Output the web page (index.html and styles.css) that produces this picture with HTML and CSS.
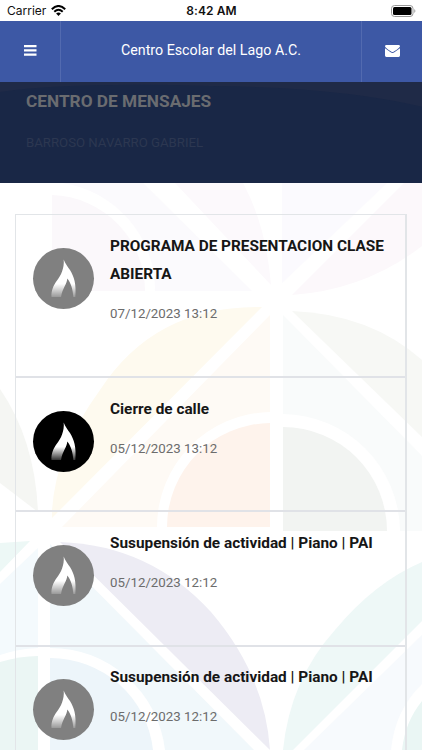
FILE: index.html
```html
<!DOCTYPE html>
<html lang="es">
<head>
<meta charset="utf-8">
<title>Centro de mensajes</title>
<link rel="stylesheet" href="styles.css">
</head>
<body>
<svg width="0" height="0" class="defs">
  <defs>
    <linearGradient id="fade" x1="0" y1="0" x2="0" y2="1">
      <stop offset="0" stop-color="#fff"/><stop offset=".65" stop-color="#fff"/><stop offset="1" stop-color="#fff" stop-opacity=".2"/>
    </linearGradient>
    <symbol id="flame" viewBox="0 0 61 61">
      <path fill="url(#fade)" d="M30.700 11.500C32 15 34.500 18.500 37 22C41 28.500 43.500 36 42.300 49H40.300C40 42 38 35 34.300 30.500C34 36 29.500 40 28 49H18.500C18 43 20.500 37 24 32.500C28 27.500 31.500 20 30.700 11.500Z"/>
    </symbol>
  </defs>
</svg>
<div class="phone">
  <div class="status">
    <div class="carrier">Carrier
      <svg width="15" height="11" viewBox="0 0 15 11"><g fill="none" stroke="#000" stroke-width="2"><path d="M.8 4.200Q7.500-2.200 14.200 4.200"/><path d="M3.300 6.700Q7.500 2.800 11.700 6.700"/></g><path d="M5.100 8.400Q7.500 6.400 9.900 8.400L7.500 10.900Z"/></svg>
    </div>
    <div class="time">8:42 AM</div>
    <svg class="battery" width="25" height="12" viewBox="0 0 25 12"><rect x=".5" y=".5" width="21.500" height="11" rx="3" fill="none" stroke="#999"/><rect x="2" y="2" width="18.500" height="8" rx="1.500"/><path d="M23.300 4Q25.500 6 23.300 8Z" fill="#999"/></svg>
  </div>
  <header class="bar">
    <div class="side"><svg width="13" height="11" viewBox="0 0 13 11"><path fill="#fff" d="M0 0h12.500v2.200H0zM0 4.300h12.500v2.200H0zM0 8.600h12.500v2.200H0z"/></svg></div>
    <div class="school">Centro Escolar del Lago A.C.</div>
    <div class="side right"><svg width="15" height="12" viewBox="0 0 15 12"><path fill="#fff" d="M1.400 0h12.200Q15 0 15 1.400Q14.500 2.800 8.800 6.500Q7.500 7.500 6.200 6.500Q.5 2.800 0 1.400Q0 0 1.400 0ZM0 3.200L5.600 7.300Q7.500 8.700 9.400 7.300L15 3.200V10.600Q15 12 13.600 12H1.400Q0 12 0 10.600Z"/></svg></div>
  </header>
  <section class="hero">
    <svg class="hill" viewBox="0 0 422 102" preserveAspectRatio="none"><path d="M0 10Q70 0 210 4Q340 5 422 25V102H0Z" fill="#192746"/></svg>
    <h1>CENTRO DE MENSAJES</h1>
    <p>BARROSO NAVARRO GABRIEL</p>
  </section>
  <main>
    <svg class="pattern" viewBox="0 183 422 567">
      <path fill="#fbf8fb" d="M52 195A96 96 0 0 1 145 291H52Z"/>
      <path fill="#fbfafd" d="M62 183H143L252 291H155A108 108 0 0 0 62 183Z"/>
      <path fill="#fcf9fc" d="M175 183H243Q266 225 271 285Z"/>
      <path fill="#fbfafe" d="M282 183H387L282 283Z"/>
      <path fill="#fcf8fb" d="M404 183H422V246Q365 290 292 295Z"/>
      <path fill="#fefaef" d="M262 307Q155 305 100 390Q56 450 52 510V518Z"/>
      <path fill="#fefaf5" d="M270 315V412A115 115 0 0 0 157 527H62Z"/>
      <path fill="#fef3ec" d="M270 423V527H167A104 104 0 0 1 270 423Z"/>
      <path fill="#f9fbfb" d="M283 315L422 456V531H400A118 118 0 0 0 283 414Z"/>
      <path fill="#f2f4f2" d="M283 427A104 104 0 0 1 387 531H283Z"/>
      <path fill="#f7f8f5" d="M292 311Q370 314 422 360V437Z"/>
      <path fill="#f5f6f3" d="M0 389Q35 440 38 512L0 483Z"/>
      <path fill="#edf8f6" d="M0 543L30 541L0 572Z"/>
      <path fill="#f4fafd" d="M38 548V648Q17 649 0 655V584Z"/>
      <path fill="#f1f8fb" d="M50 544L254 750H165A115 115 0 0 0 50 648Z"/>
      <path fill="#ebf6f4" d="M38 656V750H0V662Q20 656 38 656Z"/>
      <path fill="#edf5fa" d="M50 658A103 103 0 0 1 153 750H50Z"/>
      <path fill="#edecf4" d="M60 542Q150 545 211 612Q265 675 270 750Z"/>
      <path fill="#eef8f7" d="M283 750Q290 680 335 630Q375 582 422 562V621L293 750Z"/>
      <path fill="#f7fafd" d="M304 750L422 635V684Q395 710 391 750Z"/>
      <path fill="#eaf6f4" d="M402 750Q405 722 422 701V750Z"/>
    </svg>
    <div class="list">
      <article class="card tall"><svg class="avatar"><use href="#flame"/></svg><div><h2>PROGRAMA DE PRESENTACION CLASE ABIERTA</h2><time>07/12/2023 13:12</time></div></article>
      <article class="card"><svg class="avatar unread"><use href="#flame"/></svg><div><h2>Cierre de calle</h2><time>05/12/2023 13:12</time></div></article>
      <article class="card"><svg class="avatar"><use href="#flame"/></svg><div><h2>Susupensión de actividad | Piano | PAI</h2><time>05/12/2023 12:12</time></div></article>
      <article class="card"><svg class="avatar"><use href="#flame"/></svg><div><h2>Susupensión de actividad | Piano | PAI</h2><time>05/12/2023 12:12</time></div></article>
    </div>
  </main>
</div>
</body>
</html>
```
FILE: styles.css
```css
* { box-sizing: border-box; }
body { margin: 0; background: #fff; font-family: Roboto, sans-serif; }
.defs { position: absolute; }
.phone { width: 422px; height: 750px; overflow: hidden; display: flex; flex-direction: column; }
.status { height: 21px; flex: none; display: grid; grid-template-columns: 1fr auto 1fr; align-items: center; padding: 0 6px 0 7px; font: 12px/21px Inter, sans-serif; color: #111; }
.carrier { display: flex; align-items: center; gap: 5px; }
.time { font-weight: 600; font-size: 12px; letter-spacing: .1px; }
.battery { justify-self: end; }
.bar { height: 61px; flex: none; display: flex; background: #3d58a5; color: #fff; }
.side { width: 61px; display: flex; align-items: center; justify-content: center; border-right: 1px solid #526ab0; }
.side.right { border-right: 0; border-left: 1px solid #526ab0; }
.side svg { margin-top: -2px; }
.school { flex: 1; text-align: center; font-size: 14.250px; line-height: 58px; }
.hero { height: 101px; flex: none; position: relative; background: #1f2a47; padding: 8px 26px 0; }
.hill { position: absolute; inset: 0; width: 100%; height: 100%; }
.hero h1 { position: relative; margin: 0; font-size: 17.250px; line-height: 22px; font-weight: 700; color: #6a6c70; }
.hero p { position: relative; margin: 20px 0 0; font-size: 13.200px; line-height: 21px; color: #2c3751; }
main { position: relative; flex: 1; padding: 31px 15px 0; }
.pattern { position: absolute; top: 0; left: 0; width: 422px; height: 567px; }
.list { position: relative; border: solid #e2e5e8; border-width: 1px 2px 0 1px; }
.card { height: 134.250px; display: flex; padding: 16.500px 16px 0 17px; gap: 16px; border-bottom: 2px solid #e0e2e7; }
.card.tall { height: 163px; }
.avatar { width: 61px; height: 61px; flex: none; margin-top: 16px; border-radius: 50%; background: #808080; }
.avatar.unread { background: #000; }
.card h2 { margin: 0 0 15px; font-size: 15.360px; line-height: 28.400px; font-weight: 700; color: #161616; }
.card time { display: block; font-size: 13.300px; line-height: 22px; color: #6c6c6c; }
```
